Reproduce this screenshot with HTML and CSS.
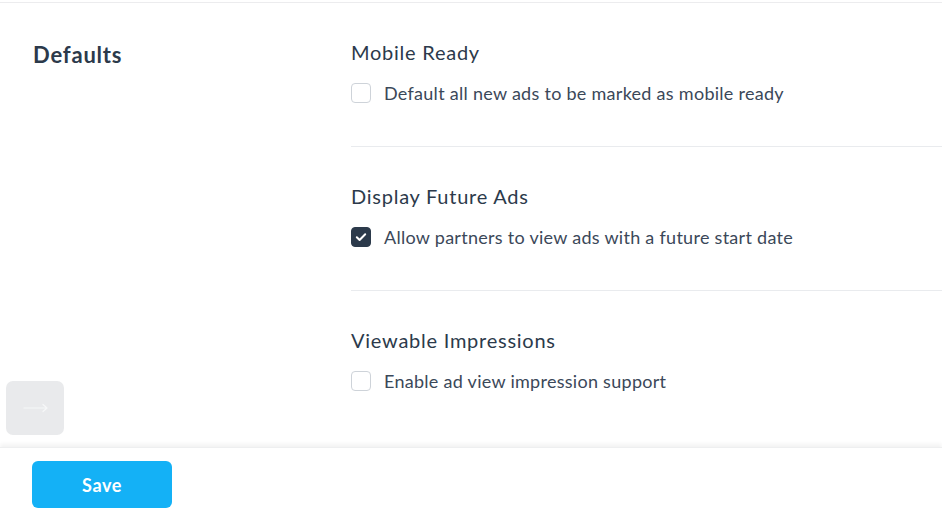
FILE: index.html
```html
<!DOCTYPE html>
<html>
<head>
<meta charset="utf-8">
<link rel="stylesheet" href="styles.css">
</head>
<body>
<div class="page">
  <div class="top-rule"></div>
  <div class="settings">
    <div class="side">
      <h2 class="group-title">Defaults</h2>
    </div>
    <div class="options">
      <div class="option">
        <h3 class="option-title">Mobile Ready</h3>
        <label class="check-row">
          <span class="box"></span>
          <span class="check-label">Default all new ads to be marked as mobile ready</span>
        </label>
      </div>
      <div class="option">
        <h3 class="option-title">Display Future Ads</h3>
        <label class="check-row">
          <span class="box checked"><svg viewBox="0 0 20 20" width="20" height="20"><path d="M5.8 10.2l2.8 2.8 5.6-5.8" fill="none" stroke="#fff" stroke-width="2" stroke-linecap="round" stroke-linejoin="round"/></svg></span>
          <span class="check-label">Allow partners to view ads with a future start date</span>
        </label>
      </div>
      <div class="option last">
        <h3 class="option-title">Viewable Impressions</h3>
        <label class="check-row">
          <span class="box"></span>
          <span class="check-label">Enable ad view impression support</span>
        </label>
      </div>
    </div>
  </div>
  <div class="footer">
    <button class="save">Save</button>
  </div>
  <button class="toggle"><svg viewBox="0 0 58 54" width="58" height="54"><path d="M18 27h23M37 23.5l4 3.5-4 3.5" fill="none" stroke="#f6f7f8" stroke-width="1.2" stroke-linecap="round" stroke-linejoin="round"/></svg></button>
</div>
</body>
</html>
```
FILE: styles.css
```css
html, body {
  margin: 0;
  padding: 0;
  background: #fff;
}
body {
  font-family: Lato, "Noto Sans", sans-serif;
  color: #2f3d4f;
  width: 942px;
  height: 512px;
  overflow: hidden;
}
.page {
  position: relative;
  height: 512px;
}
.top-rule {
  margin-top: 2px;
  height: 1px;
  background: #ececee;
}
.settings {
  display: grid;
  grid-template-columns: 351px 1fr;
}
.side {
  padding-left: 33px;
  padding-top: 38px;
}
.group-title {
  margin: 0;
  font-size: 22px;
  line-height: 28px;
  font-weight: 700;
  letter-spacing: 0.8px;
  color: #2c3a4b;
}
.option {
  padding: 37px 0 43px;
  border-bottom: 1px solid #e9ebee;
}
.option.last {
  border-bottom: none;
  padding-bottom: 56px;
}
.option-title {
  margin: 0 0 19px;
  font-size: 20px;
  line-height: 24px;
  font-weight: 400;
  letter-spacing: 0.75px;
  color: #2c3a4b;
}
.check-row {
  display: flex;
  align-items: center;
  gap: 13px;
  height: 20px;
}
.box {
  box-sizing: border-box;
  width: 20px;
  height: 20px;
  border: 1px solid #ced3d9;
  border-radius: 4px;
  background: #fff;
  display: flex;
  flex: none;
}
.box.checked {
  background: #2c3a4b;
  border-color: #2c3a4b;
}
.box.checked svg {
  margin: -1px;
}
.check-label {
  font-size: 18px;
  line-height: 20px;
  letter-spacing: 0.28px;
  color: #3b4859;
}
.footer {
  box-shadow: 0 -3px 4px rgba(0, 0, 0, 0.05);
  border-top: 1px solid #eeeff0;
  padding: 13px 0 0 32px;
  height: 64px;
}
.save {
  width: 140px;
  height: 47px;
  border: none;
  border-radius: 6px;
  background: #14b1f6;
  color: #fff;
  font-family: Lato, "Noto Sans", sans-serif;
  font-weight: 700;
  font-size: 18px;
  letter-spacing: 0.6px;
  padding: 0;
}
.toggle {
  position: absolute;
  left: 6px;
  top: 379px;
  width: 58px;
  height: 54px;
  padding: 0;
  border: none;
  border-radius: 7px;
  background: #e9eaec;
  display: flex;
}
```
